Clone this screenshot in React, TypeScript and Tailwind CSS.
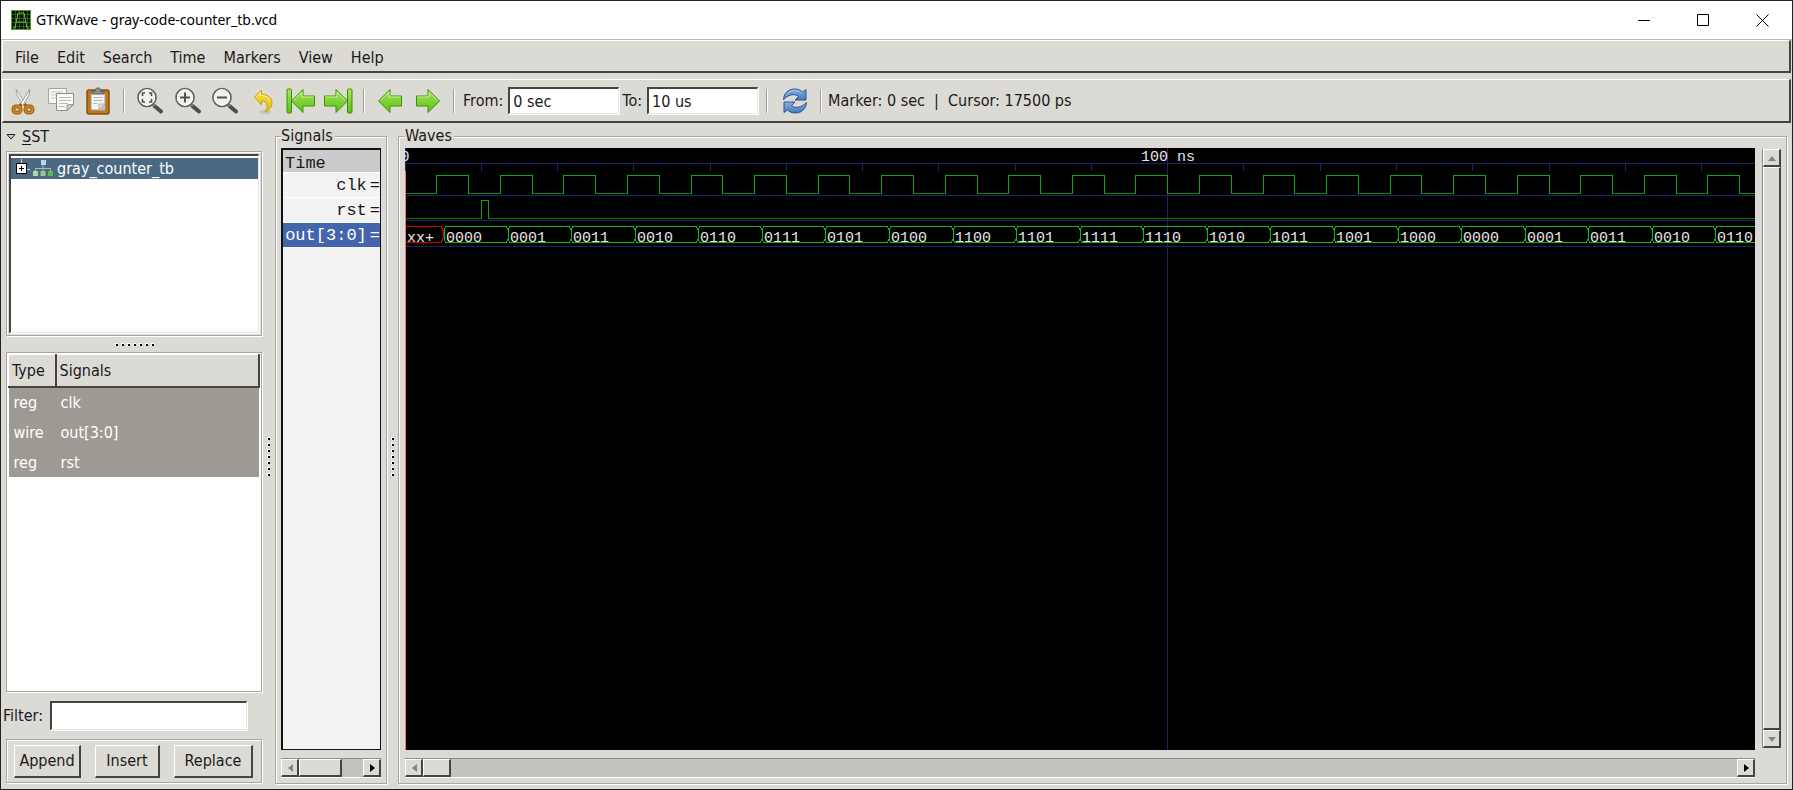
import { useLayoutEffect, useRef, useState, type ReactNode } from "react";
import clsx from "clsx";

const MENU = ["File", "Edit", "Search", "Time", "Markers", "View", "Help"];

const SIGNAL_ROWS = [
  { type: "reg", name: "clk" },
  { type: "wire", name: "out[3:0]" },
  { type: "reg", name: "rst" },
];

const TRACES = [
  { name: "clk", selected: false },
  { name: "rst", selected: false },
  { name: "out[3:0]", selected: true },
];

const GRAY = [
  "0000", "0001", "0011", "0010", "0110", "0111", "0101", "0100",
  "1100", "1101", "1111", "1110", "1010", "1011", "1001", "1000",
];

// Wave view scale
const PX_PER_NS = 7.627;
const HALF_PERIOD = 4.1667;
const LABEL_WIDTH = 36;

const raised =
  "border-t border-l border-r-2 border-b-2 border-t-white border-l-white border-r-[#45443e] border-b-[#45443e]";
const etched = "border border-[#a9a7a0] shadow-[1px_1px_0_#fff,inset_1px_1px_0_#fff]";
const sunken =
  "border-t-2 border-l-2 border-r border-b border-t-[#45443e] border-l-[#45443e] border-r-[#e8e7e3] border-b-[#e8e7e3] bg-white shadow-[1px_1px_0_#fff]";

function CutIcon() {
  return (
    <svg width="26" height="28" viewBox="0 0 26 28" fill="none">
      <path d="M6 2l1 6 6.500 11 2-2z" fill="#f4f4f4" stroke="#a5a5a2" />
      <path d="M20 2l-1 6-6.500 11-2-2z" fill="#fff" stroke="#999994" />
      <path d="M11.500 17L9 19.500M14.500 17L17 19.500" stroke="#9a5f10" strokeWidth="3" />
      <rect x="3.500" y="19.500" width="7" height="6" rx="2.500" stroke="#a5640e" strokeWidth="4" />
      <rect x="15.500" y="19.500" width="7" height="6" rx="2.500" stroke="#a5640e" strokeWidth="4" />
      <rect x="3.500" y="19.500" width="7" height="6" rx="2.500" stroke="#cf8a2c" strokeWidth="1.500" />
      <rect x="15.500" y="19.500" width="7" height="6" rx="2.500" stroke="#cf8a2c" strokeWidth="1.500" />
    </svg>
  );
}

function CopyIcon() {
  return (
    <svg width="28" height="28" viewBox="0 0 28 28" fill="none">
      <path d="M1.500 1.500h18v15h-18z" fill="#f6f6f5" stroke="#a3a39f" />
      <path d="M4 5h12M4 8h6M4 11h5" stroke="#c5c5c2" />
      <path d="M9.500 6.500h17v11l-6 6h-11z" fill="#fafafa" stroke="#8f8f8b" />
      <path d="M26 17.500l-6 6v-5.500z" fill="#d9d9d6" stroke="#8f8f8b" />
      <path d="M12 10.500h12M12 13.500h12M12 16.500h9M12 19.500h6" stroke="#b9b9b6" />
    </svg>
  );
}

function PasteIcon() {
  return (
    <svg width="24" height="28" viewBox="0 0 24 28" fill="none">
      <rect x="1" y="3" width="22" height="24" rx="2" fill="#b9781f" stroke="#8b5305" strokeWidth="1.500" />
      <path d="M5 6h14v17H5z" fill="#f5f5f4" stroke="#a19a8c" />
      <path d="M19 17.500l-6 6h6z" fill="#c2bfb7" />
      <path d="M19 17l-6 6v-6z" fill="#deddda" stroke="#999" strokeWidth=".7" />
      <path d="M7.500 10.500h9M7.500 13.500h9M7.500 16.500h4" stroke="#b5b5b2" />
      <path d="M6 7V4.500h3C9 2 10 1 12 1s3 1 3 3.500h3V7z" fill="#8b8d87" stroke="#5d5f5a" />
    </svg>
  );
}

function ZoomIcon({ kind }: { kind: "fit" | "in" | "out" }) {
  return (
    <svg width="28" height="28" viewBox="0 0 28 28" fill="none">
      <path d="M18.500 19l6.500 5.500" stroke="#4c4e4a" strokeWidth="4" strokeLinecap="round" />
      <path d="M16 16.500l3 2.500" stroke="#8a8a86" strokeWidth="2" />
      <circle cx="11" cy="10.500" r="9" fill="#f1f1ef" stroke="#60625e" strokeWidth="1.700" />
      <circle cx="11" cy="10.500" r="7.600" stroke="#fff" />
      {kind === "fit" && (
        <path
          d="M6.500 9V6H9M13 6h2.500v3M15.500 12v3H13M9 15H6.500v-3"
          stroke="#4f514d"
          strokeWidth="1.600"
        />
      )}
      {kind !== "fit" && <path d="M6 10.500h10" stroke="#50524e" strokeWidth="2" />}
      {kind === "in" && <path d="M11 5.500v10" stroke="#50524e" strokeWidth="2" />}
    </svg>
  );
}

function UndoIcon() {
  return (
    <svg width="22" height="28" viewBox="0 0 22 28" fill="none">
      <ellipse cx="13" cy="25" rx="6" ry="2" fill="#c6c4be" />
      <path
        d="M2.500 10L9.500 3v4.500C16 7.500 20 10.500 20 16c0 4-2.500 7-7 9 1.500-2.500 2.500-4.500 2-7-.5-2.500-2.500-4-5.500-4v4z"
        fill="url(#gold)"
        stroke="#c9a209"
        strokeLinejoin="round"
      />
      <path d="M4.500 10L8.500 6v2.500c5 0 9 2 9.500 5.500" stroke="#fdf3a0" />
    </svg>
  );
}

function ArrowIcon({ dir, bar }: { dir: "left" | "right"; bar?: boolean }) {
  return (
    <svg
      width={bar ? 30 : 26}
      height="28"
      viewBox={bar ? "0 0 30 28" : "4 0 26 28"}
      fill="none"
      className={clsx(dir === "right" && "-scale-x-100")}
    >
      {bar && <rect x="1" y="2" width="4.500" height="24" rx="1" fill="url(#lime)" stroke="#3f9009" />}
      <path
        d="M5.500 14L17 2.500V9h11.500v10H17v6.500z"
        fill="url(#lime)"
        stroke="#3f9009"
        strokeLinejoin="round"
      />
      <path d="M7.500 13.500L16 5v5h11.500" stroke="#c3f194" />
    </svg>
  );
}

function ReloadIcon() {
  return (
    <svg width="26" height="28" viewBox="0 0 26 28" fill="none">
      <g fill="url(#sky)" stroke="#2c5591" strokeLinejoin="round">
        <path d="M1.500 12.500C2 6 6.500 2 12.500 2c3.500 0 6 1 8 3L24 2.500V13H13l3.500-3.500C13 6.500 7 7 1.500 12.500z" />
        <path d="M24.500 15.500C24 22 19.500 26 13.500 26c-3.500 0-6-1-8-3L2 25.500V15h11l-3.500 3.500c3.500 3 9.500 2.500 15-3z" />
      </g>
      <path d="M4 9c2-4 5-5.500 8.500-5.500 3 0 5.500 1 7.500 3" stroke="#a9c6ea" />
    </svg>
  );
}

function ModuleIcon() {
  return (
    <svg width="20" height="17" viewBox="0 0 20 17">
      <path d="M10 5v6M2.500 11V8.500h15V11" fill="none" stroke="#a9b8c6" />
      <rect x="8" y="0" width="5" height="5" fill="#b5d5f5" />
      <rect x="0" y="11" width="5" height="5" fill="#b2d8a6" />
      <rect x="7.500" y="11" width="5" height="5" fill="#8fd089" />
      <rect x="15" y="11" width="5" height="5" fill="#5cb85c" />
    </svg>
  );
}

function AppIcon() {
  return (
    <svg width="20" height="20" viewBox="0 0 20 20" fill="none" className="shrink-0">
      <path d="M0 0h20v20H0z" fill="#0a0f06" />
      <path d="M4.500 0v20M8.500 0v20M12.500 0v20M16.500 0v20M0 4.500h20M0 8.500h20M0 12.500h20M0 16.500h20" stroke="#2b5c1c" />
      <path d="M2 18h2l3-15h6l3 15h2M6 12h8" stroke="#6cc22e" />
      <path d="M.5.5h19v19H.5z" stroke="#5a9c33" />
    </svg>
  );
}

// Gradients shared by the toolbar icons
function IconDefs() {
  return (
    <svg width="0" height="0" className="absolute">
      <defs>
        <linearGradient id="lime" x1="0" y1="0" x2="0" y2="1">
          <stop offset="0" stopColor="#a5e65c" />
          <stop offset="1" stopColor="#5cbf15" />
        </linearGradient>
        <linearGradient id="gold" x1="0" y1="0" x2="0" y2="1">
          <stop offset="0" stopColor="#f8e04b" />
          <stop offset="1" stopColor="#e6b90f" />
        </linearGradient>
        <linearGradient id="sky" x1="0" y1="0" x2="0" y2="1">
          <stop offset="0" stopColor="#85aede" />
          <stop offset="1" stopColor="#4479ba" />
        </linearGradient>
      </defs>
    </svg>
  );
}

function ToolButton({ label, children }: { label: string; children: ReactNode }) {
  return (
    <button type="button" aria-label={label} className="flex flex-1 items-center justify-center">
      {children}
    </button>
  );
}

function Separator({ className }: { className?: string }) {
  return <div className={clsx("h-6 w-[2px] shrink-0 border-l border-[#a09e97] bg-white", className)} />;
}

function TimeField({ label, id, value }: { label: string; id: string; value: string }) {
  return (
    <div className="flex items-center">
      <label htmlFor={id} className="pr-[5px]">
        {label}
      </label>
      <input id={id} defaultValue={value} className={clsx("h-[27px] w-[111px] px-[3px]", sunken)} />
    </div>
  );
}

function Grip({ vertical }: { vertical?: boolean }) {
  return (
    <div className={clsx("flex items-center justify-center gap-[3px]", vertical ? "flex-col" : "h-4")}>
      {Array.from({ length: 7 }, (_, i) => (
        <span key={i} className="size-[3px] border-t border-l border-white bg-black" />
      ))}
    </div>
  );
}

type Direction = "left" | "right" | "up" | "down";

const TRIANGLES: Record<Direction, string> = {
  left: "M8 1v8L3 5z",
  right: "M3 1v8l5-4z",
  up: "M1 8h8L5 3z",
  down: "M1 3h8L5 8z",
};

function ScrollButton({ dir, disabled }: { dir: Direction; disabled?: boolean }) {
  return (
    <button
      type="button"
      aria-label={`Scroll ${dir}`}
      className={clsx("flex size-[18px] shrink-0 items-center justify-center bg-[#dcdad5]", raised)}
    >
      <svg width="10" height="10" viewBox="0 0 10 10">
        <path d={TRIANGLES[dir]} fill={disabled ? "#85837d" : "#000"} />
      </svg>
    </button>
  );
}

function HScroll({ thumb }: { thumb: string }) {
  return (
    <div className="flex h-[19px] shrink-0 border-t border-[#8f8d86] bg-[#c4c2bd] shadow-[0_1px_0_#fff]">
      <ScrollButton dir="left" disabled />
      <div className={clsx("bg-[#dcdad5]", raised, thumb)} />
      <div className="flex-1" />
      <ScrollButton dir="right" />
    </div>
  );
}

function SstPanel() {
  return (
    <aside className="flex w-[261px] shrink-0 flex-col pb-[6px] pl-[5px]">
      <h2 className="flex h-7 items-center">
        <svg width="10" height="8" viewBox="0 0 10 8" className="mr-[6px]">
          <path d="M1 1.500h8L5 6z" fill="#c9c7c0" stroke="#222" />
        </svg>
        <span>
          <span className="underline underline-offset-2">S</span>ST
        </span>
      </h2>

      <div className={clsx("h-[185px] p-[2px]", etched)}>
        <div className={clsx("h-full pt-[2px]", sunken)}>
          <div className="flex h-[21px] items-center bg-[#4b6983] text-white">
            <button type="button" aria-label="Expand gray_counter_tb" className="mr-[3px] ml-[5px]">
              <svg width="14" height="20" viewBox="0 0 14 20" fill="none">
                <path d="M5.500 0v4M11 10.500h3" stroke="#c8d2dc" />
                <path d="M.5 4.500h10v10H.5z" fill="#fff" stroke="#000" />
                <path d="M3 9.500h5M5.500 7v5" stroke="#000" />
              </svg>
            </button>
            <ModuleIcon />
            <span className="pt-px pl-1">gray_counter_tb</span>
          </div>
        </div>
      </div>

      <Grip />

      <div className={clsx("flex-1 bg-white p-px", etched)}>
        <table className="w-full text-left">
          <thead>
            <tr className="h-8 bg-[#dcdad5]">
              <th className={clsx("w-[47px] px-[3px] pt-[2px] font-normal", raised)}>Type</th>
              <th className={clsx("px-[3px] pt-[2px] font-normal", raised)}>Signals</th>
            </tr>
          </thead>
          <tbody className="bg-[#9c9a93] text-white">
            {SIGNAL_ROWS.map((row) => (
              <tr key={row.name} className="h-[30px]">
                <td className="pt-[2px] pl-[5px]">{row.type}</td>
                <td className="pt-[2px] pl-[5px]">{row.name}</td>
              </tr>
            ))}
          </tbody>
        </table>
      </div>

      <div className="-ml-[3px] flex h-[47px] items-center">
        <label htmlFor="filter" className="w-[47px]">
          Filter:
        </label>
        <input id="filter" className={clsx("h-[29px] w-[197px] px-1", sunken)} />
      </div>

      <div className={clsx("flex h-11 items-center justify-between pr-[8px] pl-[7px]", etched)}>
        <button type="button" className={clsx("h-[33px] w-[67px]", raised)}>
          Append
        </button>
        <button type="button" className={clsx("h-[33px] w-[65px]", raised)}>
          Insert
        </button>
        <button type="button" className={clsx("h-[33px] w-[79px]", raised)}>
          Replace
        </button>
      </div>
    </aside>
  );
}

function Frame({ title, className, children }: { title: string; className: string; children: ReactNode }) {
  return (
    <fieldset className={clsx("mt-px mb-[5px] flex min-w-0 flex-col pr-[5px] pb-[6px]", etched, className)}>
      <legend className="bg-[#dcdad5] pr-[2px] leading-6">{title}</legend>
      {children}
    </fieldset>
  );
}

function SignalsPanel() {
  return (
    <Frame title="Signals" className="w-[112px] shrink-0 pl-[5px]">
      <div className="mb-2 flex-1 overflow-hidden border-2 border-r border-b border-[#111] bg-[#f3f3f3] font-['Liberation_Mono',monospace] text-[17px] whitespace-nowrap">
        <div className="h-[22px] bg-[#cbcbcb] pl-[2px] leading-[28px]">Time</div>
        {TRACES.map((trace) => (
          <div
            key={trace.name}
            className={clsx(
              "flex h-[25px] items-center justify-end gap-[3px] border-t border-white pt-px",
              trace.selected && "border-[#4464ac] bg-[#4464ac] text-white"
            )}
          >
            <span>{trace.name}</span>
            <span>=</span>
          </div>
        ))}
      </div>
      <HScroll thumb="w-[43px]" />
    </Frame>
  );
}

function Waveforms() {
  const ref = useRef<SVGSVGElement>(null);
  const [width, setWidth] = useState(0);

  useLayoutEffect(() => {
    const svg = ref.current;
    if (!svg) return;
    const measure = () => setWidth(svg.getBoundingClientRect().width);
    measure();
    const observer = new ResizeObserver(measure);
    observer.observe(svg);
    return () => observer.disconnect();
  }, []);

  const half = HALF_PERIOD * PX_PER_NS;
  const cycles = Math.ceil(width / (half * 2));
  const ticks = Math.ceil(width / (10 * PX_PER_NS));
  const busStart = (i: number) => Math.round((5 + i * HALF_PERIOD * 2) * PX_PER_NS) + 1;

  return (
    <svg
      ref={ref}
      width="100%"
      height="100%"
      fill="none"
      shapeRendering="crispEdges"
      className="block font-['Liberation_Mono',monospace] text-[15px]"
    >
      <g stroke="#202070">
        <path d={`M0 15.500H${width}M0 47.500H${width}M0 72.500H${width}M0 98.500H${width}`} />
        {Array.from({ length: ticks }, (_, i) => {
          const x = Math.floor(i * 10 * PX_PER_NS) + 0.5;
          return <line key={i} x1={x} x2={x} y1={i % 10 ? 15 : 0} y2={i % 10 ? 23 : "100%"} />;
        })}
      </g>

      {/* clk */}
      {Array.from({ length: cycles }, (_, i) => {
        const low = Math.floor(i * 2 * half) + 0.5;
        const rise = Math.floor((i * 2 + 1) * half) + 0.5;
        const fall = Math.floor((i * 2 + 2) * half) + 0.5;
        return (
          <g key={i}>
            <path d={`M${low} 45.500H${rise}`} stroke="#008c00" />
            <path d={`M${rise} 46V27.500H${fall}V46`} stroke="#10a810" />
          </g>
        );
      })}

      {/* rst */}
      <path d={`M0 70.500H76M84 70.500H${width}`} stroke="#008000" />
      <path d="M76.500 71V52.500h7V71" stroke="#10a810" />

      {/* out[3:0] */}
      <path d="M0 78.500h36l2 4v8l-2 4H0z" stroke="#d00000" />
      <text x="2" y="94" fill="#e6e6e6">
        xx+
      </text>
      {Array.from({ length: cycles }, (_, i) => {
        const x = busStart(i);
        const end = busStart(i + 1);
        return (
          <g key={i}>
            <path
              d={`M${x + 2} 78.500H${end - 2}L${end} 82V91L${end - 2} 94.500H${x + 2}L${x} 91V82Z`}
              stroke="#10b810"
            />
            {x + LABEL_WIDTH < width && (
              <text x={x + 2} y="94" fill="#e6e6e6">
                {GRAY[i % GRAY.length]}
              </text>
            )}
          </g>
        );
      })}

      <text x="0" y="13" fill="#e6e6e6" textAnchor="middle">
        0
      </text>
      <text x="763" y="13" fill="#e6e6e6" textAnchor="middle">
        100 ns
      </text>
      <line x1="0.500" x2="0.500" y1="23" y2="100%" stroke="#ff7070" />
    </svg>
  );
}

function WavesPanel() {
  return (
    <Frame title="Waves" className="flex-1 pl-[6px]">
      <div className="flex min-h-0 flex-1 gap-[7px]">
        <div className="flex min-w-0 flex-1 flex-col gap-2">
          <div className="min-h-0 flex-1 overflow-hidden bg-black">
            <Waveforms />
          </div>
          <HScroll thumb="w-7" />
        </div>
        <div className="mt-px mb-[29px] flex w-[19px] flex-col border-l border-[#8f8d86]">
          <ScrollButton dir="up" disabled />
          <div className={clsx("flex-1", raised)} />
          <ScrollButton dir="down" disabled />
        </div>
      </div>
    </Frame>
  );
}

export default function App() {
  return (
    <div className="flex h-screen flex-col overflow-hidden border border-[#222] bg-[#dcdad5] font-['DejaVu_Sans_Condensed','Noto_Sans',sans-serif] text-base leading-5 text-[#1a1a1a]">
      <IconDefs />
      <header className="flex h-[39px] shrink-0 items-center border-b border-[#b9b8b5] bg-white pl-[10px] font-['Noto_Sans',sans-serif] text-black">
        <AppIcon />
        <h1 className="ml-[5px] flex-1 text-sm">GTKWave - gray-code-counter_tb.vcd</h1>
        <div className="flex gap-[46px] pr-[23px]">
          <button type="button" aria-label="Minimize">
            <svg width="13" height="13" stroke="#000">
              <path d="M0 6.500h12" />
            </svg>
          </button>
          <button type="button" aria-label="Maximize">
            <svg width="13" height="13" stroke="#000" fill="none">
              <path d="M.5.5h11v11H.5z" />
            </svg>
          </button>
          <button type="button" aria-label="Close">
            <svg width="13" height="13" stroke="#000">
              <path d="M.5.5l12 12M12.500.5l-12 12" />
            </svg>
          </button>
        </div>
      </header>

      <nav className={clsx("mx-px flex h-[33px] shrink-0 items-center pt-[3px] pl-[3px]", raised)}>
        {MENU.map((item) => (
          <button key={item} type="button" className="px-[9px]">
            {item}
          </button>
        ))}
      </nav>

      <div className={clsx("mx-px mt-[6px] flex h-11 shrink-0 items-center pl-px whitespace-nowrap", raised)}>
        <div className="flex w-[113px]">
          <ToolButton label="Cut"><CutIcon /></ToolButton>
          <ToolButton label="Copy"><CopyIcon /></ToolButton>
          <ToolButton label="Paste"><PasteIcon /></ToolButton>
        </div>
        <Separator className="mx-[6px]" />
        <div className="flex w-[226px]">
          <ToolButton label="Zoom fit"><ZoomIcon kind="fit" /></ToolButton>
          <ToolButton label="Zoom in"><ZoomIcon kind="in" /></ToolButton>
          <ToolButton label="Zoom out"><ZoomIcon kind="out" /></ToolButton>
          <ToolButton label="Zoom undo"><UndoIcon /></ToolButton>
          <ToolButton label="Zoom to start"><ArrowIcon dir="left" bar /></ToolButton>
          <ToolButton label="Zoom to end"><ArrowIcon dir="right" bar /></ToolButton>
        </div>
        <Separator className="mx-[6px]" />
        <div className="flex w-[76px]">
          <ToolButton label="Previous edge"><ArrowIcon dir="left" /></ToolButton>
          <ToolButton label="Next edge"><ArrowIcon dir="right" /></ToolButton>
        </div>
        <Separator className="mr-[8px] ml-[6px]" />
        <div className="flex gap-[3px]">
          <TimeField label="From:" id="from" value="0 sec" />
          <TimeField label="To:" id="to" value="10 us" />
        </div>
        <Separator className="mx-[8px]" />
        <div className="flex w-[38px]">
          <ToolButton label="Reload"><ReloadIcon /></ToolButton>
        </div>
        <Separator className="mx-[6px]" />
        <p className="whitespace-pre">Marker: 0 sec  |  Cursor: 17500 ps</p>
      </div>

      <main className="flex min-h-0 flex-1 pr-[5px]">
        <SstPanel />
        <div className="flex w-[13px] shrink-0 items-center justify-center">
          <Grip vertical />
        </div>
        <SignalsPanel />
        <div className="flex w-[11px] shrink-0 items-center justify-center">
          <Grip vertical />
        </div>
        <WavesPanel />
      </main>
    </div>
  );
}
